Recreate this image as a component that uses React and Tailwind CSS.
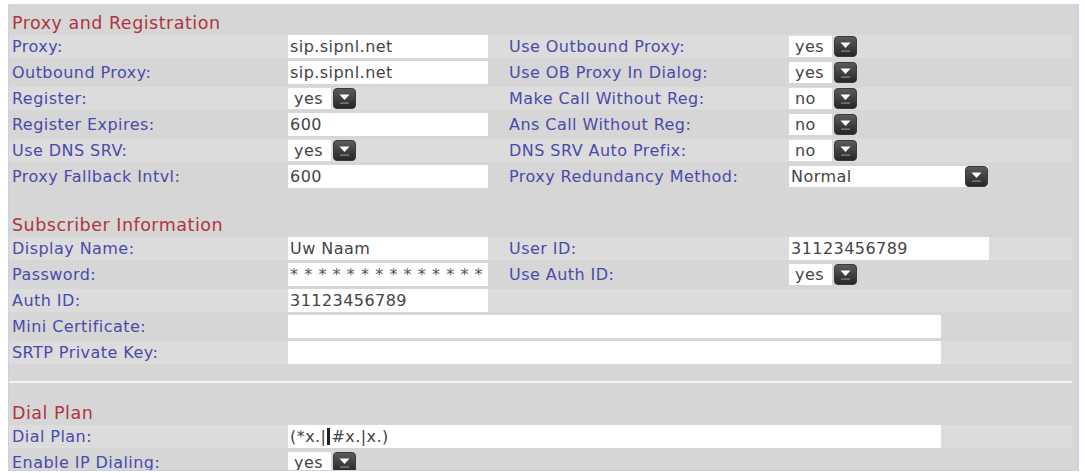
import React from 'react';

const LABEL = 'text-[#4a4aac]';

function DropButton() {
  return (
    <svg width="23" height="21" viewBox="0 0 23 21" className="shrink-0">
      <defs>
        <linearGradient id="dropg" x1="0" y1="0" x2="0" y2="1">
          <stop offset="0" stopColor="#5c5c5c" />
          <stop offset="1" stopColor="#252525" />
        </linearGradient>
      </defs>
      <rect x="0.5" y="0.5" width="22" height="20" rx="3.5" fill="url(#dropg)" stroke="#3a3a3a" />
      <path d="M6.5 6.5 L16.5 6.5 L11.5 12 Z" fill="#ffffff" />
      <rect x="7" y="14.5" width="9" height="1.2" fill="#8a8a8a" />
    </svg>
  );
}

function TextBox({ value, wide, children }) {
  return (
    <div
      className={`h-[23px] bg-white flex items-center pl-[2px] text-[#444] whitespace-nowrap overflow-hidden ${
        wide ? 'w-[653px]' : 'w-[200px]'
      }`}
    >
      {children || value}
    </div>
  );
}

function SmallSelect({ value }) {
  return (
    <div className="flex items-center gap-[2px]">
      <div className="h-[21px] w-[43px] bg-white flex items-center pl-[6px] text-[#444]">{value}</div>
      <DropButton />
    </div>
  );
}

function WideSelect({ value }) {
  return (
    <div className="flex items-center h-[21px] w-[199px] bg-white">
      <div className="flex-1 pl-[2px] text-[#444]">{value}</div>
      <DropButton />
    </div>
  );
}

function Field({ f }) {
  if (!f) return null;
  if (f.type === 'input') return <TextBox value={f.value} />;
  if (f.type === 'select') return <SmallSelect value={f.value} />;
  if (f.type === 'wideselect') return <WideSelect value={f.value} />;
  return null;
}

function Row({ idx, label, field, label2, field2, wide }) {
  const bg = idx % 2 === 0 ? 'bg-[#dcdcdc]' : 'bg-[#d6d6d6]';
  return (
    <div className="h-[26px] pb-[3px]">
      <div className={`h-[23px] grid grid-cols-[276px_221px_280px_1fr] items-center pl-[3px] ${bg}`}>
        <div className={LABEL}>{label}</div>
        {wide ? (
          <div className="col-span-3">{wide}</div>
        ) : (
          <>
            <div>
              <Field f={field} />
            </div>
            <div className={LABEL}>{label2}</div>
            <div>
              <Field f={field2} />
            </div>
          </>
        )}
      </div>
    </div>
  );
}

function Header({ title }) {
  return (
    <div className="h-[26px] flex items-center pt-[3px] pl-[3px] text-[17.5px] tracking-[0.5px] text-[#b0343f]">
      {title}
    </div>
  );
}

export default function App() {
  return (
    <div
      className="h-[473px] w-[1085px] bg-white pt-[4px] pl-[8px] pr-[6px] overflow-hidden text-[16px] tracking-[0.45px] leading-none"
      style={{ fontFamily: '"DejaVu Sans", Verdana, sans-serif' }}
    >
      <div className="h-[467px] bg-[#d6d6d6] border-l border-r-2 border-b border-[#c9d2ea] pr-[5px] overflow-hidden">
        <div className="pt-[5px]">
          <Header title="Proxy and Registration" />
          <Row idx={0} label="Proxy:" field={{ type: 'input', value: 'sip.sipnl.net' }} label2="Use Outbound Proxy:" field2={{ type: 'select', value: 'yes' }} />
          <Row idx={1} label="Outbound Proxy:" field={{ type: 'input', value: 'sip.sipnl.net' }} label2="Use OB Proxy In Dialog:" field2={{ type: 'select', value: 'yes' }} />
          <Row idx={2} label="Register:" field={{ type: 'select', value: 'yes' }} label2="Make Call Without Reg:" field2={{ type: 'select', value: 'no' }} />
          <Row idx={3} label="Register Expires:" field={{ type: 'input', value: '600' }} label2="Ans Call Without Reg:" field2={{ type: 'select', value: 'no' }} />
          <Row idx={4} label="Use DNS SRV:" field={{ type: 'select', value: 'yes' }} label2="DNS SRV Auto Prefix:" field2={{ type: 'select', value: 'no' }} />
          <Row idx={5} label="Proxy Fallback Intvl:" field={{ type: 'input', value: '600' }} label2="Proxy Redundancy Method:" field2={{ type: 'wideselect', value: 'Normal' }} />
        </div>

        <div className="pt-[20px]">
          <Header title="Subscriber Information" />
          <Row idx={0} label="Display Name:" field={{ type: 'input', value: 'Uw Naam' }} label2="User ID:" field2={{ type: 'input', value: '31123456789' }} />
          <div className="h-[26px] pb-[3px]">
            <div className="h-[23px] grid grid-cols-[276px_221px_280px_1fr] items-center pl-[3px] bg-[#d6d6d6]">
              <div className={LABEL}>Password:</div>
              <div>
                <TextBox>
                  <span className="tracking-[6.2px] text-[#555]">**************</span>
                </TextBox>
              </div>
              <div className={LABEL}>Use Auth ID:</div>
              <div>
                <SmallSelect value="yes" />
              </div>
            </div>
          </div>
          <Row idx={2} label="Auth ID:" field={{ type: 'input', value: '31123456789' }} />
          <Row idx={3} label="Mini Certificate:" wide={<TextBox wide value="" />} />
          <Row idx={4} label="SRTP Private Key:" wide={<TextBox wide value="" />} />
        </div>

        <div className="h-[14px]" />
        <div className="h-[2px] bg-[#f4f4f4]" />

        <div className="pt-[16px]">
          <Header title="Dial Plan" />
          <Row
            idx={0}
            label="Dial Plan:"
            wide={
              <TextBox wide>
                <span>(*x.|</span>
                <span className="inline-block w-[3px] h-[17px] bg-[#222] mx-[1px]" />
                <span>#x.|x.)</span>
              </TextBox>
            }
          />
          <Row idx={1} label="Enable IP Dialing:" field={{ type: 'select', value: 'yes' }} />
        </div>
      </div>
    </div>
  );
}
